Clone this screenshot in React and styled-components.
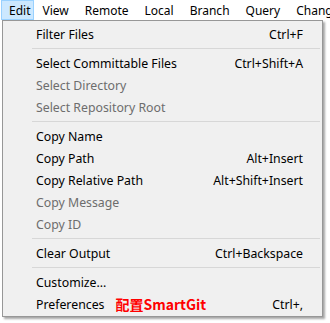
import React from "react";
import styled, { createGlobalStyle } from "styled-components";

const GlobalStyle = createGlobalStyle`
  html, body {
    margin: 0;
    padding: 0;
    background: #ffffff;
  }
  body {
    font-family: "Noto Sans", "Liberation Sans", sans-serif;
    width: 330px;
    height: 323px;
    overflow: hidden;
  }
`;

const Window = styled.div`
  width: 330px;
  height: 323px;
  display: flex;
  flex-direction: column;
  background: #ffffff;
  overflow: hidden;
`;

const MenuBar = styled.div`
  height: 20px;
  display: flex;
  align-items: stretch;
  padding-left: 1px;
  background: #ffffff;
  overflow: hidden;
`;

const BarItem = styled.div`
  display: flex;
  align-items: center;
  flex-shrink: 0;
  padding: 0 ${(p) => p.$pr || 7}px 0 7px;
  font-size: 12px;
  color: #000;
  white-space: nowrap;
  box-sizing: border-box;
  border: 1px solid ${(p) => (p.$active ? "#99d1ff" : "transparent")};
  background: ${(p) => (p.$active ? "#cce8ff" : "transparent")};
`;

const Body = styled.div`
  display: flex;
  padding-left: 2px;
`;

const Dropdown = styled.div`
  width: 321px;
  box-sizing: border-box;
  background: #f0f0f0;
  border: 1px solid #979797;
  padding: 2px 0 1px;
  box-shadow: 2px 2px 2px rgba(0, 0, 0, 0.35);
`;

const Row = styled.div`
  height: 22px;
  display: flex;
  align-items: center;
  padding: 0 19px 0 33px;
  font-size: 12.3px;
  color: ${(p) => (p.$disabled ? "#6d6d6d" : "#000")};
  white-space: nowrap;
`;

const Label = styled.span`
  flex: 1;
  display: flex;
  align-items: center;
`;

const Shortcut = styled.span`
  text-align: right;
`;

const Note = styled.span`
  margin-left: 11px;
  color: #ff0000;
  font-weight: 700;
  font-size: 14px;
  font-family: "Noto Sans CJK SC", "Noto Sans", sans-serif;
`;

const Separator = styled.div`
  height: 7px;
  display: flex;
  align-items: center;
  padding: 0 2px 0 29px;
  &::after {
    content: "";
    flex: 1;
    height: 1px;
    background: #d7d7d7;
  }
`;

const groups = [
  [{ label: "Filter Files", key: "Ctrl+F" }],
  [
    { label: "Select Committable Files", key: "Ctrl+Shift+A" },
    { label: "Select Directory", disabled: true },
    { label: "Select Repository Root", disabled: true },
  ],
  [
    { label: "Copy Name" },
    { label: "Copy Path", key: "Alt+Insert" },
    { label: "Copy Relative Path", key: "Alt+Shift+Insert" },
    { label: "Copy Message", disabled: true },
    { label: "Copy ID", disabled: true },
  ],
  [{ label: "Clear Output", key: "Ctrl+Backspace" }],
  [
    { label: "Customize..." },
    { label: "Preferences", key: "Ctrl+,", note: "配置SmartGit" },
  ],
];

const menus = ["Edit", "View", "Remote", "Local", "Branch", "Query", "Changes"];

export default function App() {
  return (
    <Window>
      <GlobalStyle />
      <MenuBar>
        {menus.map((m, i) => (
          <BarItem key={m} $active={i === 0} $pr={i === 0 ? 3 : 7}>
            {m}
          </BarItem>
        ))}
      </MenuBar>
      <Body>
        <Dropdown>
          {groups.map((group, gi) => (
            <React.Fragment key={gi}>
              {gi > 0 && <Separator />}
              {group.map((item) => (
                <Row key={item.label} $disabled={item.disabled}>
                  <Label>
                    {item.label}
                    {item.note && <Note>{item.note}</Note>}
                  </Label>
                  {item.key && <Shortcut>{item.key}</Shortcut>}
                </Row>
              ))}
            </React.Fragment>
          ))}
        </Dropdown>
      </Body>
    </Window>
  );
}
